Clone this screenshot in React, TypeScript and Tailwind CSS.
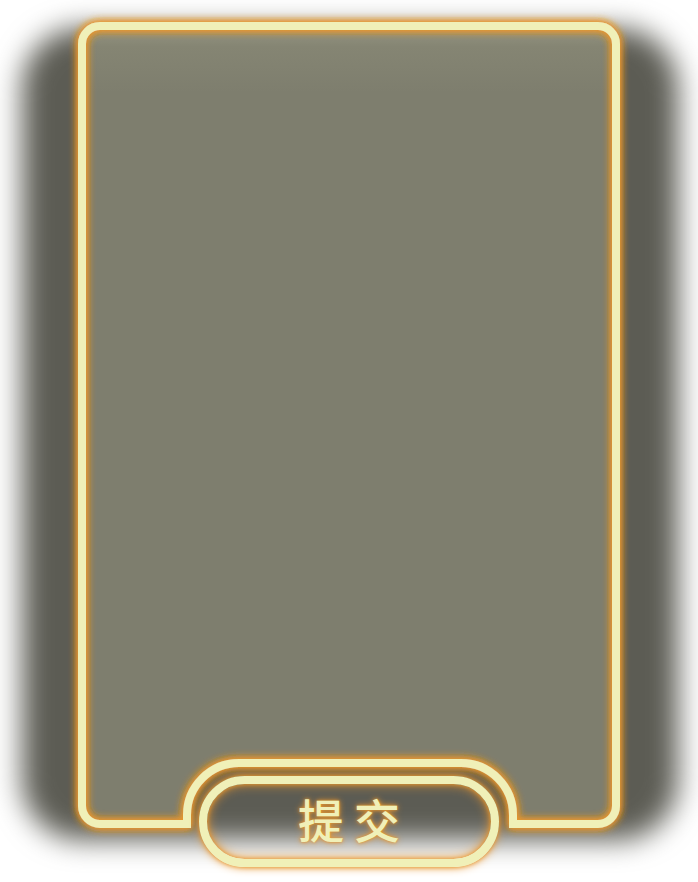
export default function App() {
  // frame outline, stroke centred 4px in from the card box
  const frame =
    "M 22 4 H 520 A 18 18 0 0 1 538 22 V 784 A 18 18 0 0 1 520 802 H 435 V 793 A 52 52 0 0 0 383 741 H 161 A 52 52 0 0 0 109 793 V 802 H 22 A 18 18 0 0 1 4 784 V 22 A 18 18 0 0 1 22 4 Z";

  return (
    <div className="relative w-[698px] h-[882px] overflow-hidden bg-white flex flex-col items-center pt-[22px]">
      {/* blurred backdrop behind the card */}
      <div className="absolute left-[22px] right-[20px] top-[28px] bottom-[42px] rounded-[60px] bg-[#5c5c54] blur-[14px]" />

      <div className="relative w-[542px] h-[806px]">
        <svg
          className="absolute inset-0 overflow-visible"
          width="542"
          height="806"
          viewBox="0 0 542 806"
        >
          <defs>
            <linearGradient id="fill" x1="0" y1="0" x2="0" y2="70" gradientUnits="userSpaceOnUse">
              <stop offset="0" stopColor="#9a9a86" />
              <stop offset="0.35" stopColor="#858573" />
              <stop offset="1" stopColor="#7e7e6e" />
            </linearGradient>
            <filter id="glow" x="-10%" y="-10%" width="120%" height="120%">
              <feFlood floodColor="#e8962e" result="c" />
              <feComposite in="c" in2="SourceAlpha" operator="in" result="o" />
              <feGaussianBlur in="o" stdDeviation="5" result="b" />
              <feGaussianBlur in="o" stdDeviation="2" result="b2" />
              <feMerge>
                <feMergeNode in="b" />
                <feMergeNode in="b" />
                <feMergeNode in="b2" />
                <feMergeNode in="SourceGraphic" />
              </feMerge>
            </filter>
          </defs>
          <path d={frame} fill="url(#fill)" />
          <path d={frame} fill="none" stroke="#f0f0b8" strokeWidth="8" filter="url(#glow)" />
        </svg>
      </div>

      <button className="relative z-10 -mt-[52px] w-[300px] h-[91px] rounded-full border-[8px] border-[#f0f0b8] bg-transparent shadow-[0_0_10px_#e8962e,0_0_4px_#e8962e,inset_0_0_12px_#e8962e,inset_0_0_4px_#e8962e] flex items-center justify-center pb-[8px] pl-[10px] text-[46px] leading-none font-medium tracking-[10px] text-[#f0f0b8] [font-family:'Noto_Sans_CJK_SC','Noto_Sans',sans-serif] [text-shadow:0_0_6px_#e8962e,0_0_3px_#e8962e]">
        提交
      </button>
    </div>
  );
}
